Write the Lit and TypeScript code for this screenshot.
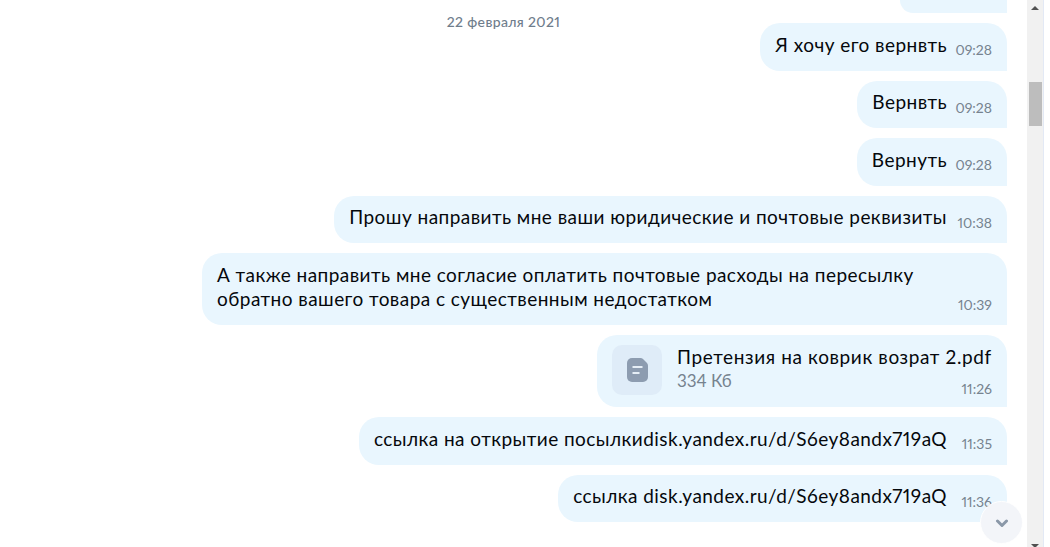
import { LitElement, html, css } from 'lit'
import { customElement } from 'lit/decorators.js'

const messages = [
  { text: 'Я хочу его вернвть', time: '09:28' },
  { text: 'Вернвть', time: '09:28' },
  { text: 'Вернуть', time: '09:28' },
  { text: 'Прошу направить мне ваши юридические и почтовые реквизиты', time: '10:38' },
]

@customElement('app-root')
export class AppRoot extends LitElement {
  static styles = css`
    :host {
      display: flex;
      width: 1050px;
      height: 547px;
      overflow: hidden;
      position: relative;
      background: #fff;
      font-family: 'Lato', 'Open Sans', sans-serif;
      font-variant-numeric: proportional-nums;
      color: #05080c;
    }
    .chat {
      width: 1007px;
      height: 547px;
      flex: none;
      overflow: hidden;
      display: flex;
      flex-direction: column;
      align-items: flex-end;
    }
    .stub { width: 107px; height: 13px; background: #e9f6fe; border-radius: 0 0 0 18px; flex: none; }
    .date {
      align-self: stretch;
      text-align: center;
      font-size: 14px;
      font-weight: 500;
      line-height: 20px;
      letter-spacing: 0.35px;
      color: #6f7d8c;
      margin: -1px 0 -19px;
    }
    .bubble {
      flex: none;
      box-sizing: border-box;
      display: flex;
      align-items: flex-end;
      margin-top: 10px;
      background: #e9f6fe;
      border-radius: 20px 20px 0 20px;
      padding: 9.5px 15px 13.5px;
      font-size: 19px;
      line-height: 24.5px;
      letter-spacing: 0.45px;
      gap: 8px;
    }
    .time { width: 37px; text-align: right; font-size: 14px; line-height: 18px; color: #76838f; flex: none; letter-spacing: 0; margin-bottom: -2px; }
    .multi { width: 805px; justify-content: space-between; }
    .file { width: 410px; height: 72px; align-items: center; padding: 9px 15px 11px; gap: 15px; }
    .file-icon {
      width: 50px; height: 50px; background: #dfecf8; border-radius: 10px;
      display: flex; align-items: center; justify-content: center; flex: none;
    }
    .file-body { flex: 1; display: flex; flex-direction: column; }
    .file-name { line-height: 24px; margin-top: 2px; white-space: nowrap; letter-spacing: 0.62px; }
    .file-size { font-size: 17px; line-height: 20px; color: #76838f; letter-spacing: 0; margin-top: 2px; }
    .file-time { align-self: flex-end; font-size: 14px; line-height: 18px; color: #76838f; letter-spacing: 0; margin-top: -11px; }
    .scrollbar {
      position: absolute; top: 0; left: 1027px; width: 17px; height: 547px;
      box-sizing: border-box; background: #f1f1f1; border-right: 1px solid #e3e9f5;
    }
    .thumb { position: absolute; top: 82px; left: 2px; width: 13px; height: 44px; background: #bdbdbd; }
    .arrow-up, .arrow-down { position: absolute; left: 4px; width: 0; height: 0; border-left: 4px solid transparent; border-right: 4px solid transparent; }
    .arrow-up { top: 6px; border-bottom: 4px solid #505050; }
    .arrow-down { bottom: -1px; border-top: 4px solid #505050; }
    .down {
      position: absolute; left: 980px; top: 501px; width: 43px; height: 43px; border-radius: 50%;
      box-sizing: border-box; border: 1px solid #fff;
      background: #f3f5f9; display: flex; align-items: center; justify-content: center;
    }
    .chevron { margin: 2px 0 0 1px; }
  `

  render() {
    return html`
      <div class="chat">
        <div class="stub"></div>
        <div class="date">22 февраля 2021</div>
        ${messages.map((m) => html`
          <div class="bubble"><span>${m.text}</span><span class="time">${m.time}</span></div>
        `)}
        <div class="bubble multi">
          <span>А также направить мне согласие оплатить почтовые расходы на пересылку<br />обратно вашего товара с существенным недостатком</span>
          <span class="time">10:39</span>
        </div>
        <div class="bubble file">
          <div class="file-icon">
            <svg width="21" height="24" viewBox="0 0 21 24">
              <path fill="#8d9cb0" d="M5 0h8.5c1 0 1.8.4 2.5 1l4 4c.6.7 1 1.5 1 2.5V19a5 5 0 0 1-5 5H5a5 5 0 0 1-5-5V5a5 5 0 0 1 5-5z" />
              <path fill="#e6eef6" d="M5.5 8h10v2h-10zM5.5 14h7v2h-7z" />
            </svg>
          </div>
          <div class="file-body">
            <span class="file-name">Претензия на коврик возрат 2.pdf</span>
            <span class="file-size">334 Кб</span>
            <span class="file-time">11:26</span>
          </div>
        </div>
        <div class="bubble"><span>ссылка на открытие посылкиdisk.yandex.ru/d/S6ey8andx719aQ</span><span class="time">11:35</span></div>
        <div class="bubble"><span>ссылка disk.yandex.ru/d/S6ey8andx719aQ</span><span class="time">11:36</span></div>
      </div>
      <div class="scrollbar"><div class="arrow-up"></div><div class="thumb"></div><div class="arrow-down"></div></div>
      <div class="down">
        <svg class="chevron" width="14" height="9" viewBox="0 0 14 9"><path d="M2.5 2L7 6.5 11.5 2" fill="none" stroke="#8a98a8" stroke-width="3" stroke-linecap="round" stroke-linejoin="round" /></svg>
      </div>
    `
  }
}
